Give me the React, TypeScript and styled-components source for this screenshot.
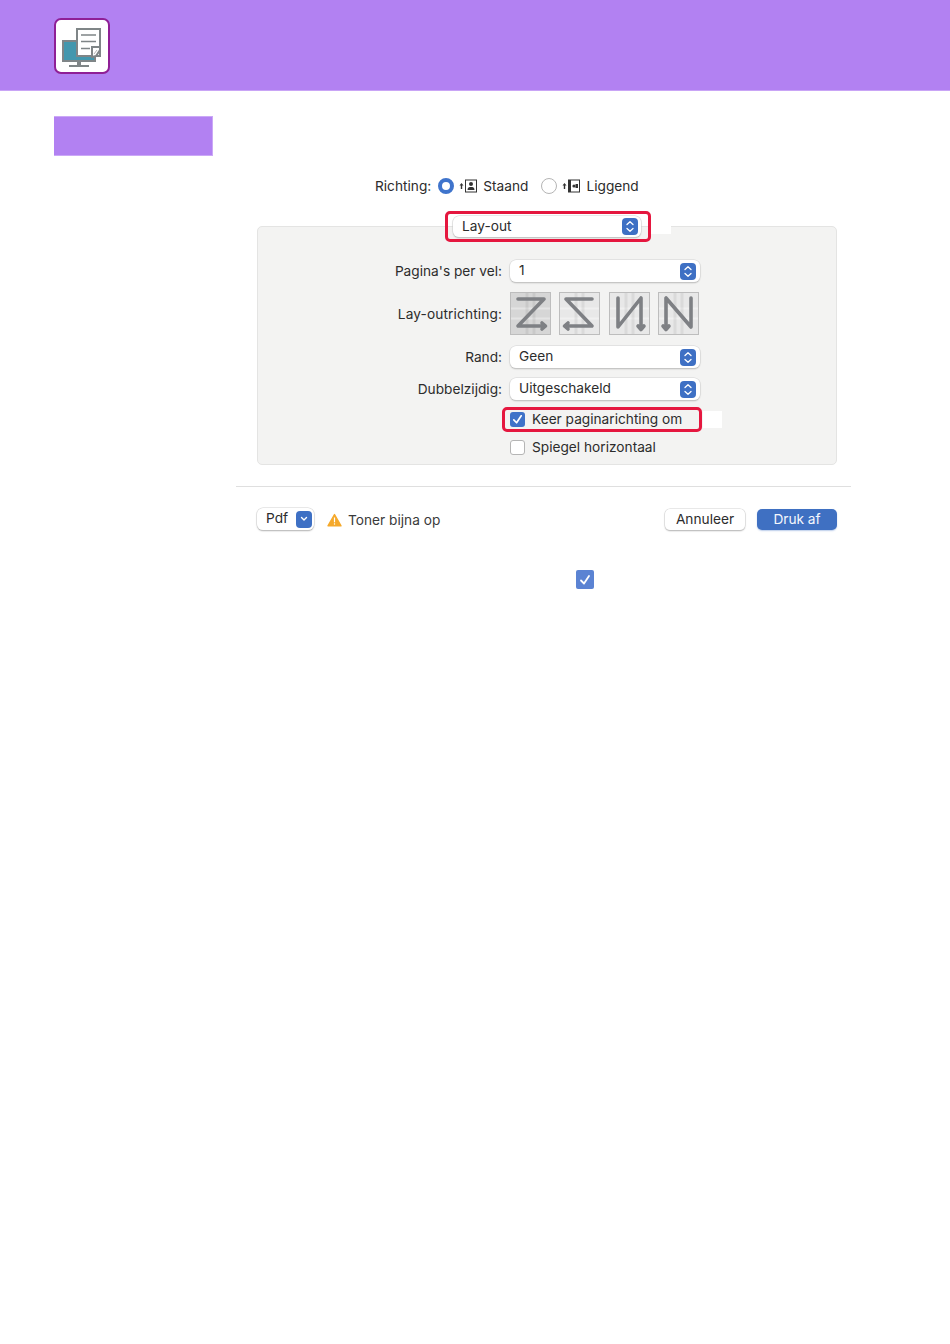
import React from 'react'
import styled, { createGlobalStyle } from 'styled-components'

const GlobalStyle = createGlobalStyle`
  html, body {
    margin: 0;
    padding: 0;
    background: #fff;
    font-family: 'Inter', 'Liberation Sans', sans-serif;
    color: #2c2c2c;
  }
`

const Page = styled.div`
  width: 950px;
  height: 1344px;
  overflow: hidden;
`

const Header = styled.header`
  box-sizing: border-box;
  height: 91px;
  padding: 18px 0 0 54px;
  background: #b281f2;
  border-bottom: 1px solid #c9a5f6;
`

const LogoBox = styled.div`
  box-sizing: border-box;
  width: 56px;
  height: 56px;
  background: #fff;
  border: 2px solid #8f1f96;
  border-radius: 7px;
  display: flex;
  align-items: center;
  justify-content: center;
`

const Content = styled.main`
  padding: 25px 0 0 54px;
`

const Tab = styled.div`
  box-sizing: border-box;
  width: 159px;
  height: 40px;
  background: #b281f2;
  border: 1px solid #cba8f7;
  border-width: 1px 1px 1px 0;
`

const Dialog = styled.section`
  width: 615px;
  margin: 20px 0 0 182px;
`

const OrientationRow = styled.div`
  height: 20px;
  display: flex;
  align-items: center;
  padding-left: 139px;
  font-size: 13.7px;
`

const OrientationLabel = styled.span<{ $gap: number }>`
  margin-right: ${({ $gap }) => $gap}px;
  white-space: nowrap;
`

const Radio = styled.span<{ $checked?: boolean }>`
  box-sizing: border-box;
  width: 16px;
  height: 16px;
  border-radius: 50%;
  flex: none;
  margin-right: 5px;
  background: #fff;
  border: ${({ $checked }) => ($checked ? '4.5px solid #3f74cc' : '1px solid #b5b5b5')};
`

const GlyphSlot = styled.span`
  display: flex;
  margin: 0 5px 1px 0;
`

const PanelArea = styled.div`
  position: relative;
  margin: 30px 14px 0 21px;
`

const Panel = styled.div`
  box-sizing: border-box;
  height: 239px;
  padding: 33px 0 0;
  background: #f3f3f2;
  border: 1px solid #e4e4e3;
  border-radius: 5px;
`

const Form = styled.div`
  display: grid;
  grid-template-columns: 244px 190px;
  column-gap: 8px;
  align-items: center;
  font-size: 13.7px;
`

const FieldLabel = styled.div`
  text-align: right;
  white-space: nowrap;
  height: 22px;
  line-height: 22px;
`

const Select = styled.div<{ $width?: number }>`
  box-sizing: border-box;
  width: ${({ $width }) => $width ?? 190}px;
  height: 22px;
  padding: 0 4px 0 9px;
  display: flex;
  align-items: center;
  justify-content: space-between;
  background: #fff;
  border-radius: 6px;
  font-size: 13.7px;
  box-shadow: 0 0 0 0.5px #d4d4d4, 0 1px 1.5px rgba(0, 0, 0, 0.3);
`

const SelectValue = styled.span`
  margin-bottom: 2px;
`

const Stepper = styled.span`
  width: 16px;
  height: 17px;
  border-radius: 4px;
  background: #3e70c4;
  display: flex;
  align-items: center;
  justify-content: center;
`

const DirectionLabel = styled(FieldLabel)`
  margin: 10px 0 11px;
  letter-spacing: 0.12px;
`

const Directions = styled.div`
  display: flex;
  gap: 8.4px;
  margin: 10px 0 11px;
`

const DirectionTile = styled.div<{ $selected?: boolean }>`
  width: 41px;
  height: 43px;
  flex: none;
  box-sizing: border-box;
  border: 1px solid #bdbdbd;
  background: ${({ $selected }) => ($selected ? '#d6d6d6' : '#e8e8e8')};
`

const Spacer = styled.div``

const RandLabel = styled(FieldLabel)`
  margin-bottom: 10px;
`

const RandSelect = styled(Select)`
  margin-bottom: 10px;
`

const CheckRow = styled.label<{ $mt: number }>`
  display: flex;
  align-items: center;
  gap: 7px;
  height: 18px;
  margin-top: ${({ $mt }) => $mt}px;
  font-size: 13.7px;
  white-space: nowrap;
`

const CheckBox = styled.span<{ $checked?: boolean }>`
  box-sizing: border-box;
  width: 15px;
  height: 15px;
  flex: none;
  border-radius: 3px;
  display: flex;
  align-items: center;
  justify-content: center;
  background: ${({ $checked }) => ($checked ? '#3f72c8' : '#fff')};
  border: ${({ $checked }) => ($checked ? 'none' : '1px solid #b5b5b5')};
`

const Highlight = styled.div<{ $left: number; $top: number; $width: number; $height: number }>`
  position: absolute;
  box-sizing: border-box;
  left: ${({ $left }) => $left}px;
  top: ${({ $top }) => $top}px;
  width: ${({ $width }) => $width}px;
  height: ${({ $height }) => $height}px;
  border: 3px solid #e5173f;
  border-radius: 5px;
`

const Patch = styled.div<{ $left: number; $top: number; $width: number; $height: number }>`
  position: absolute;
  left: ${({ $left }) => $left}px;
  top: ${({ $top }) => $top}px;
  width: ${({ $width }) => $width}px;
  height: ${({ $height }) => $height}px;
  background: #fff;
`

const FloatingSelect = styled(Select)`
  position: absolute;
  left: 196px;
  top: -10px;
  height: 21px;
  padding-right: 3px;
`

const Divider = styled.hr`
  margin: 21px 0 0;
  border: 0;
  height: 1px;
  background: #dfdfdf;
`

const Footer = styled.div`
  display: flex;
  align-items: center;
  margin: 21px 14px 0 21px;
  height: 22px;
  font-size: 13.7px;
`

const PdfButton = styled.div`
  box-sizing: border-box;
  width: 57px;
  height: 22px;
  padding: 0 2px 0 9px;
  display: flex;
  align-items: center;
  justify-content: space-between;
  background: #fff;
  border-radius: 6px;
  box-shadow: 0 0 0 0.5px #d4d4d4, 0 1px 1.5px rgba(0, 0, 0, 0.38);
`

const Warning = styled.div`
  display: flex;
  align-items: center;
  gap: 6px;
  margin: 2px 0 0 13px;
  color: #3a3a3a;
`

const FooterActions = styled.div`
  margin-left: auto;
  display: flex;
  gap: 12px;
`

const Button = styled.div<{ $primary?: boolean }>`
  box-sizing: border-box;
  width: 80px;
  height: 21px;
  line-height: 20px;
  text-align: center;
  border-radius: 5px;
  background: ${({ $primary }) => ($primary ? '#3f70c2' : '#fff')};
  color: ${({ $primary }) => ($primary ? '#f4f7fc' : '#2c2c2c')};
  box-shadow: ${({ $primary }) =>
    $primary
      ? '0 1px 1.5px rgba(63, 112, 194, 0.35)'
      : '0 0 0 0.5px #d4d4d4, 0 1px 1.5px rgba(0, 0, 0, 0.38)'};
`

const NoteCheck = styled.div`
  box-sizing: border-box;
  width: 18px;
  height: 19px;
  margin: 40px 0 0 340px;
  background: #5b83d3;
  border-radius: 2px;
  display: flex;
  align-items: center;
  justify-content: center;
`

const Logo = () => (
  <svg width="52" height="52" viewBox="0 0 52 52">
    <rect x="7" y="21" width="32" height="20" fill="#4397ae" stroke="#7f8587" strokeWidth="2" />
    <rect x="21" y="42" width="4" height="4" fill="#7f8587" />
    <rect x="13" y="45" width="20" height="2" fill="#7f8587" />
    <rect x="21" y="9" width="23" height="27" fill="#fff" stroke="#7f8587" strokeWidth="2" />
    <path d="M25 15h15M25 21.5h15M25 28.5h9" stroke="#7f8587" strokeWidth="1.5" />
    <path d="M36 37V27h8v3l-4 6z" fill="#fff" stroke="#7f8587" strokeWidth="2" />
    <path d="M38 34l3-4" stroke="#b5b5b5" strokeWidth="1" />
  </svg>
)

const Chevrons = () => (
  <svg width="10" height="13" viewBox="0 0 10 13" fill="none" stroke="#fff" strokeWidth="1.3" strokeLinecap="round" strokeLinejoin="round">
    <path d="M2 4.5L5 1.8 8 4.5M2 8.5L5 11.2 8 8.5" />
  </svg>
)

const PortraitGlyph = () => (
  <svg width="19" height="14" viewBox="0 0 19 14">
    <path d="M2.5 4L0.5 6.5h1.3V10h1.4V6.5h1.3z" fill="#333" />
    <rect x="6.5" y="1" width="11" height="12" fill="#fff" stroke="#333" strokeWidth="1" />
    <circle cx="12" cy="5" r="2" fill="#333" />
    <path d="M8.5 11c0-2.5 1.5-3 3.5-3s3.5.5 3.5 3z" fill="#333" />
  </svg>
)

const LandscapeGlyph = () => (
  <svg width="19" height="14" viewBox="0 0 19 14">
    <path d="M2.5 4L0.5 6.5h1.3V10h1.4V6.5h1.3z" fill="#333" />
    <rect x="6.5" y="1" width="11" height="12" fill="#fff" stroke="#333" strokeWidth="1" />
    <rect x="6" y="1" width="3" height="12" fill="#333" />
    <circle cx="12" cy="7" r="1.6" fill="#333" />
    <path d="M13.5 5h2.5v4h-2.5z" fill="#333" />
  </svg>
)

// page-order tiles: stroke plus arrow head
const directionPaths = [
  'M7 6h26L7 33h27M31 30l3.5 3-3.5 3',
  'M32 6H6l26 27H5M8 30l-3.5 3 3.5 3',
  'M8 5v29L31 5v31M28 33l3 3.5 3-3.5',
  'M32 34V5M32 34L7 5v31M4 33l3 3.5 3-3.5',
]

const DirectionIcon = ({ index }: { index: number }) => (
  <svg width="39" height="41" viewBox="0 0 39 41" fill="none">
    <path d="M0 15.5h39M0 25.5h39" stroke="#fff" strokeOpacity="0.35" strokeWidth="2" />
    <path d="M16 0v41M23 0v41" stroke="#000" strokeOpacity="0.06" strokeWidth="3" />
    <path d={directionPaths[index]} stroke="#7e8084" strokeWidth="3.6" strokeLinejoin="round" strokeLinecap="round" />
  </svg>
)

const Tick = ({ size }: { size: number }) => (
  <svg width={size} height={size} viewBox="0 0 14 14" fill="none" stroke="#fff" strokeWidth="1.8" strokeLinecap="round" strokeLinejoin="round">
    <path d="M3 7.5l3 3 5-7.5" />
  </svg>
)

export default function App() {
  return (
    <Page>
      <GlobalStyle />
      <Header>
        <LogoBox>
          <Logo />
        </LogoBox>
      </Header>
      <Content>
        <Tab />
        <Dialog>
          <OrientationRow>
            <OrientationLabel $gap={7}>Richting:</OrientationLabel>
            <Radio $checked />
            <GlyphSlot>
              <PortraitGlyph />
            </GlyphSlot>
            <OrientationLabel $gap={13}>Staand</OrientationLabel>
            <Radio />
            <GlyphSlot>
              <LandscapeGlyph />
            </GlyphSlot>
            <OrientationLabel $gap={0}>Liggend</OrientationLabel>
          </OrientationRow>

          <PanelArea>
            <Panel>
              <Form>
                <FieldLabel>Pagina's per vel:</FieldLabel>
                <Select>
                  <SelectValue>1</SelectValue>
                  <Stepper>
                    <Chevrons />
                  </Stepper>
                </Select>

                <DirectionLabel>Lay-outrichting:</DirectionLabel>
                <Directions>
                  {directionPaths.map((_, index) => (
                    <DirectionTile key={index} $selected={index === 0}>
                      <DirectionIcon index={index} />
                    </DirectionTile>
                  ))}
                </Directions>

                <RandLabel>Rand:</RandLabel>
                <RandSelect>
                  <SelectValue>Geen</SelectValue>
                  <Stepper>
                    <Chevrons />
                  </Stepper>
                </RandSelect>

                <FieldLabel>Dubbelzijdig:</FieldLabel>
                <Select>
                  <SelectValue>Uitgeschakeld</SelectValue>
                  <Stepper>
                    <Chevrons />
                  </Stepper>
                </Select>

                <Spacer />
                <CheckRow $mt={10}>
                  <CheckBox $checked>
                    <Tick size={13} />
                  </CheckBox>
                  Keer paginarichting om
                </CheckRow>

                <Spacer />
                <CheckRow $mt={10}>
                  <CheckBox />
                  Spiegel horizontaal
                </CheckRow>
              </Form>
            </Panel>

            <Patch $left={394} $top={-1} $width={20} $height={9} />
            <Highlight $left={188} $top={-15} $width={206} $height={31} />
            <FloatingSelect $width={188}>
              <SelectValue>Lay-out</SelectValue>
              <Stepper>
                <Chevrons />
              </Stepper>
            </FloatingSelect>
            <Patch $left={446} $top={185} $width={19} $height={17} />
            <Highlight $left={245} $top={181} $width={200} $height={25} />
          </PanelArea>

          <Divider />

          <Footer>
            <PdfButton>
              <SelectValue>Pdf</SelectValue>
              <Stepper>
                <svg width="10" height="8" viewBox="0 0 10 8" fill="none" stroke="#fff" strokeWidth="1.4" strokeLinecap="round" strokeLinejoin="round">
                  <path d="M2.5 2.5L5 5l2.5-2.5" />
                </svg>
              </Stepper>
            </PdfButton>
            <Warning>
              <svg width="15" height="14" viewBox="0 0 15 14">
                <path d="M7.5 1.5L14 12.8H1z" fill="#f5a92b" stroke="#f5a92b" strokeWidth="1.4" strokeLinejoin="round" />
                <rect x="6.9" y="4.5" width="1.2" height="4.8" fill="#fff" />
                <rect x="6.9" y="10.3" width="1.2" height="1.3" fill="#fff" />
              </svg>
              Toner bijna op
            </Warning>
            <FooterActions>
              <Button>Annuleer</Button>
              <Button $primary>Druk af</Button>
            </FooterActions>
          </Footer>

          <NoteCheck>
            <Tick size={14} />
          </NoteCheck>
        </Dialog>
      </Content>
    </Page>
  )
}
